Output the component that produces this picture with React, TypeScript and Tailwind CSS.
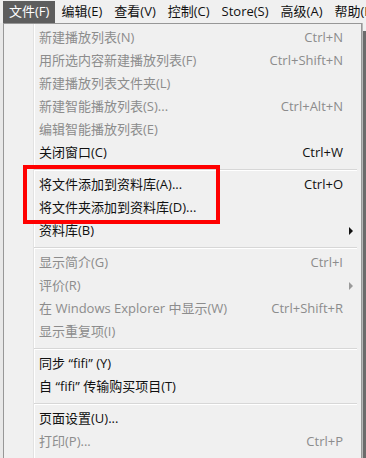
import React from 'react'

type Item =
  | { sep: true }
  | { sep?: false; label: string; shortcut?: string; disabled?: boolean; submenu?: boolean }

const items: Item[] = [
  { label: '新建播放列表(N)', shortcut: 'Ctrl+N', disabled: true },
  { label: '用所选内容新建播放列表(F)', shortcut: 'Ctrl+Shift+N', disabled: true },
  { label: '新建播放列表文件夹(L)', disabled: true },
  { label: '新建智能播放列表(S)...', shortcut: 'Ctrl+Alt+N', disabled: true },
  { label: '编辑智能播放列表(E)', disabled: true },
  { label: '关闭窗口(C)', shortcut: 'Ctrl+W' },
  { sep: true },
  { label: '将文件添加到资料库(A)...', shortcut: 'Ctrl+O' },
  { label: '将文件夹添加到资料库(D)...' },
  { label: '资料库(B)', submenu: true },
  { sep: true },
  { label: '显示简介(G)', shortcut: 'Ctrl+I', disabled: true },
  { label: '评价(R)', submenu: true, disabled: true },
  { label: '在 Windows Explorer 中显示(W)', shortcut: 'Ctrl+Shift+R', disabled: true },
  { label: '显示重复项(I)', disabled: true },
  { sep: true },
  { label: '同步 “fifi” (Y)' },
  { label: '自 “fifi” 传输购买项目(T)' },
  { sep: true },
  { label: '页面设置(U)...' },
  { label: '打印(P)...', shortcut: 'Ctrl+P', disabled: true },
]

const menus = ['文件(F)', '编辑(E)', '查看(V)', '控制(C)', 'Store(S)', '高级(A)', '帮助(H)']

function MenuRow({ item }: { item: Item }) {
  if (item.sep) {
    return (
      <div className="h-[9px] pl-[30px] pr-[4px] pt-[5px]">
        <div className="h-px bg-[#d7d7d7]" />
        <div className="h-px bg-white" />
      </div>
    )
  }
  const color = item.disabled ? 'text-[#8c8c8c]' : 'text-[#111]'
  return (
    <div className={`h-[23px] flex items-center pl-[35px] pr-[18px] ${color}`}>
      <span className="flex-1 whitespace-nowrap">{item.label}</span>
      {item.shortcut && <span className="whitespace-nowrap">{item.shortcut}</span>}
      {item.submenu && (
        <span
          className={`mr-[-10px] w-0 h-0 border-y-[4px] border-y-transparent border-l-[4px] ${
            item.disabled ? 'border-l-[#9a9a9a]' : 'border-l-[#111]'
          }`}
        />
      )}
    </div>
  )
}

export default function App() {
  return (
    <div
      className="relative w-[366px] h-[458px] overflow-hidden bg-[#f0f0f0] text-[13px]"
      style={{ fontFamily: '"Open Sans", "Noto Sans CJK SC", sans-serif' }}
    >
      <div className="h-[23px] flex items-center pl-[3px] bg-[#f0f0f0]">
        {menus.map((m, i) => (
          <div
            key={m}
            className={`h-[22px] flex items-center px-[6px] whitespace-nowrap ${
              i === 0 ? 'bg-[#5e5e5e] text-white' : 'text-[#111]'
            }`}
          >
            {m}
          </div>
        ))}
      </div>

      <div className="flex h-[435px]">
        <div className="w-[3px] bg-[#e8e8e8]" />
        <div className="relative w-[359px] border border-[#979797] border-b-0 bg-[#f0f0f0] pt-[2px]">
          <div className="absolute left-[29px] top-0 bottom-0 w-px bg-[#e2e2e2]" />
          <div className="absolute left-[30px] top-0 bottom-0 w-px bg-white" />
          <div className="relative">
            {items.map((it, i) => (
              <MenuRow key={i} item={it} />
            ))}
          </div>
        </div>
        <div className="flex-1 flex">
          <div className="w-[1px] bg-[#b8b8b8]" />
          <div className="flex-1 bg-[#6b6b6b] mt-[8px]" />
        </div>
      </div>

      <div className="absolute left-[23px] top-[165px] w-[197px] h-[59px] border-[4px] border-[#ff0000]" />
    </div>
  )
}
